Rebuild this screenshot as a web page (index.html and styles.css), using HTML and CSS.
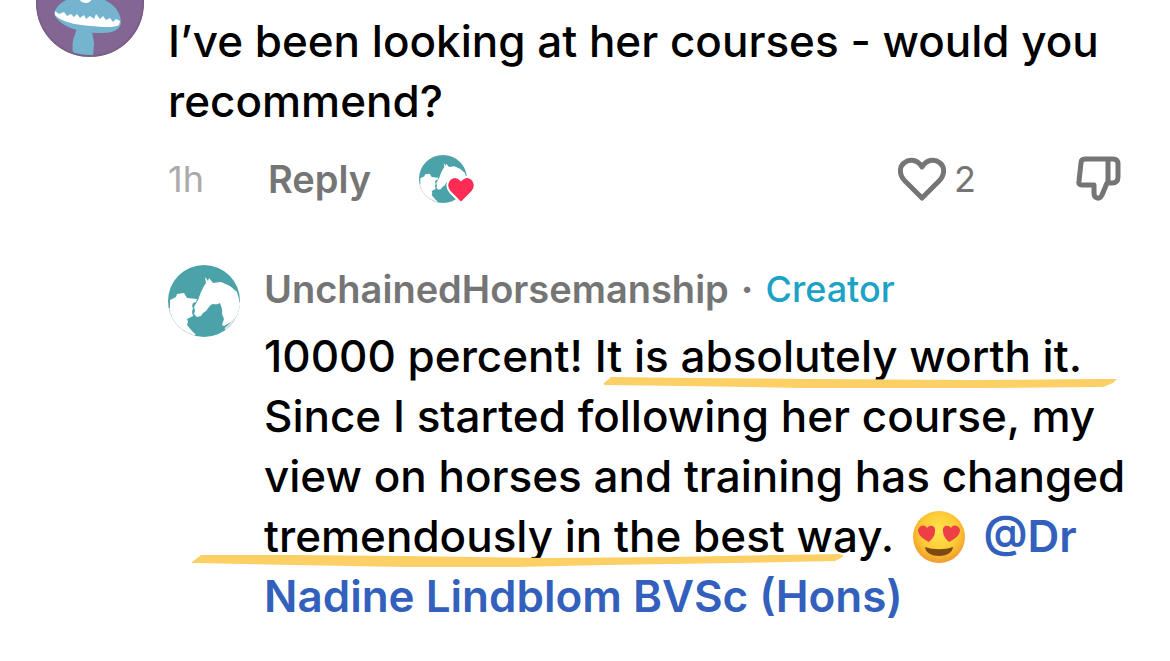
FILE: index.html
```html
<!DOCTYPE html>
<html lang="en">
<head>
  <meta charset="UTF-8">
  <meta name="viewport" content="width=device-width, initial-scale=1.0">
  <title>Comments</title>
  <link rel="stylesheet" href="styles.css">
</head>
<body>
  <svg class="defs" aria-hidden="true">
    <symbol id="horse" viewBox="0 0 72 72">
      <circle cx="36" cy="36" r="36" fill="#4ba2a8"/>
      <path fill="none" stroke="#e3e5e6" stroke-width="2" d="M2 43C4 55 13 66 27 70M71 38C70 50 65 58 57 64"/>
      <path fill="#fff" d="M37 12L40 16L41 13L45 18L53 17L62 21L69 27L71 34L72 40L69 50L63 57L56 61L54 60L56 54L54 49C55 45 53 41 52 38C49 40 47 39 45 39C41 40 40 44 38 46L35 48L33 51L29 52L26 49L27 46L26 42L30 35L33 27L36 21L38 18z"/>
      <path fill="#fff" d="M2 35L8 32L9 29L16 28L19 33L29 34L28 37L25 38L24 41L25 43L24 47L25 51L19 54L20 57L19 60L24 66L28 70C14 67 4 57 2 44z"/>
    </symbol>
  </svg>

  <main class="comments">
    <article class="comment">
      <svg class="avatar" viewBox="0 0 108 108" role="img" aria-label="Avatar">
        <clipPath id="round"><circle cx="54" cy="54" r="54"/></clipPath>
        <g clip-path="url(#round)">
          <rect width="108" height="108" fill="#846694"/>
          <path fill="#75b4cf" d="M40 76L57 79C55 85 58 89 58 95L57 108H38C36 100 36 94 38 88C40 83 41 80 40 76z"/>
          <path fill="#75b4cf" d="M18 65C20 55 32 47 50 47C69 47 85 58 85 74C84 81 76 84 66 84C44 84 24 78 18 65z"/>
          <path fill="#fff" d="M19 62L23 65L28 63L31 67L35 65L38 68L41 65L44 69L48 66L50 70L54 67L58 70L60 65L64 70L67 67L70 71L74 69L77 73L80 70L84 72L83 76C79 79 66 78 55 77C40 76 25 73 19 66z"/>
          <path fill="#fff" d="M42 48H58C55 52 53 54 50 54C46 54 44 52 42 48z"/>
          <circle cx="54" cy="54" r="53" fill="none" stroke="#7a6089" stroke-width="2"/>
        </g>
      </svg>
      <div class="content">
        <p class="text">I’ve been looking at her courses - would you recommend?</p>
        <div class="actions">
          <time class="time">1h</time>
          <button class="reply-btn" type="button">Reply</button>
          <span class="liked-by">
            <svg class="liked-avatar" role="img" aria-label="Liked by creator"><use href="#horse"/></svg>
            <svg class="liked-heart" viewBox="0 0 30 30" aria-hidden="true">
              <path fill="#fe2c55" stroke="#fff" stroke-width="2" d="M15 29L4 18C0 13 1 8 4 5c4-3 8-2 11 1 3-3 7-4 11-1 3 3 4 8 0 13z"/>
            </svg>
          </span>
          <button class="like-btn" type="button" aria-label="Like, 2 likes">
            <svg class="heart" viewBox="0 0 48 44" aria-hidden="true">
              <path d="M24 41L7 24C1 18 1 10 6 6C12 1 20 3 24 10C28 3 36 1 42 6C47 10 47 18 41 24z"/>
            </svg>
            <span>2</span>
          </button>
          <button class="dislike-btn" type="button" aria-label="Dislike">
            <svg class="thumb" viewBox="0 0 46 46" aria-hidden="true">
              <path d="M9 3H37Q42 3 42 8V21Q42 27 36 27H31L26 39Q24 43 21 42Q18 41 18 37V29H6Q2 29 3 25L5 7Q5 3 9 3zM32 3V27"/>
            </svg>
          </button>
        </div>

        <article class="reply">
          <svg class="reply-avatar" role="img" aria-label="UnchainedHorsemanship"><use href="#horse"/></svg>
          <div class="content">
            <div class="author"><a class="name" href="#">UnchainedHorsemanship</a><span class="dot">·</span><span class="creator">Creator</span></div>
            <p class="text">10000 percent! <span class="marked">It is absolutely worth it.<svg class="marker marker-short" viewBox="0 0 514 12" aria-hidden="true"><path d="M0 8l8-7 80 1 120 1 160 1 130-1 16 0-4 4-10 4-130 1-170 0-120-2-78-1z"/></svg></span> Since I started following her course, my view on horses and training has changed <span class="marked">tremendously in the best way.<svg class="marker marker-long" viewBox="0 0 652 14" aria-hidden="true"><path d="M0 8l9-7 91 0 110 1 150 2 120-1 110-2 58-1 4 2-9 5-100 2-130 2-90 2-110 0-110-2-100-2-102-1z"/></svg></span>
              <svg class="emoji" viewBox="0 0 52 52" role="img" aria-label="Heart eyes">
                <defs>
                  <radialGradient id="face" cx=".5" cy=".4" r=".6">
                    <stop offset="0" stop-color="#ffe650"/>
                    <stop offset=".6" stop-color="#fdcb35"/>
                    <stop offset="1" stop-color="#f09a2c"/>
                  </radialGradient>
                </defs>
                <circle cx="26" cy="26" r="26" fill="url(#face)"/>
                <path fill="#7b4a12" d="M12 36c9 3 19 3 28 0-1 12-27 12-28 0z"/>
                <path id="eye" fill="#ee3f46" d="M16 31C10 28 5 24 5 19c1-5 7-6 9-2 3-4 9-2 8 3 0 5-3 8-6 11z"/>
                <use href="#eye" transform="matrix(-1 0 0 1 52 0)"/>
              </svg>
              <a class="mention" href="#">@Dr Nadine Lindblom BVSc (Hons)</a></p>
          </div>
        </article>
      </div>
    </article>
  </main>
</body>
</html>
```
FILE: styles.css
```css
* {
  box-sizing: border-box;
}

body {
  margin: 0;
  background: #fff;
  color: #000;
  font-family: Inter, "Noto Sans", sans-serif;
}

button {
  padding: 0;
  border: none;
  background: none;
  color: inherit;
  font: inherit;
  cursor: pointer;
}

a {
  text-decoration: none;
}

.defs {
  position: absolute;
  width: 0;
  height: 0;
}

.comments {
  padding: 11px 36px 32px;
  overflow: hidden;
}

.comment,
.reply {
  display: flex;
  align-items: flex-start;
  gap: 24px;
}

.content {
  flex: 1;
  min-width: 0;
}

.avatar {
  width: 108px;
  height: 108px;
  margin-top: -62px; /* top of the list is scrolled away */
  flex: none;
}

.text {
  margin: 0;
  font-size: 44px;
  font-weight: 500;
  line-height: 60px;
}

/* Actions */
.actions {
  display: flex;
  align-items: center;
  height: 48px;
  margin-top: 24px;
  padding-right: 12px;
  color: #757575;
  font-size: 36px;
  line-height: 48px;
}

.time {
  width: 100px;
  color: #aaa;
}

.reply-btn {
  font-size: 38px;
  font-weight: 600;
}

.liked-by {
  position: relative;
  height: 48px;
  margin-left: 48px;
}

.liked-avatar {
  display: block;
  width: 48px;
  height: 48px;
}

.liked-heart {
  position: absolute;
  right: -9px;
  bottom: -1px;
  width: 30px;
  height: 30px;
}

.like-btn {
  display: flex;
  align-items: center;
  gap: 8px;
  margin-left: auto;
}

.heart,
.thumb {
  fill: none;
  stroke: #757575;
  stroke-width: 5;
  stroke-linejoin: round;
}

.heart {
  width: 48px;
  height: 44px;
}

.dislike-btn {
  display: flex;
  margin-left: 100px;
}

.thumb {
  width: 46px;
  height: 46px;
}

/* Reply */
.reply {
  margin-top: 62px;
}

.reply-avatar {
  width: 72px;
  height: 72px;
  flex: none;
}

.author {
  display: flex;
  gap: 12px;
  margin-bottom: 13px;
  color: #757575;
  font-size: 38px;
  line-height: 48px;
}

.name {
  color: inherit;
  font-weight: 600;
}

.dot {
  font-weight: 700;
}

.creator {
  color: #1ba2c4;
  font-size: 36px;
  font-weight: 500;
}

.mention {
  color: #335fbd;
  font-weight: 600;
}

/* Highlighter strokes under the text */
.marked {
  position: relative;
}

.marker {
  position: absolute;
  bottom: -5px;
  fill: #fdd066;
}

.marker-short {
  left: 8px;
  width: 514px;
  height: 12px;
}

.marker-long {
  left: -72px;
  width: 652px;
  height: 14px;
}

.emoji {
  width: 52px;
  height: 52px;
  margin: 0 7px;
  vertical-align: -11px;
}
```
